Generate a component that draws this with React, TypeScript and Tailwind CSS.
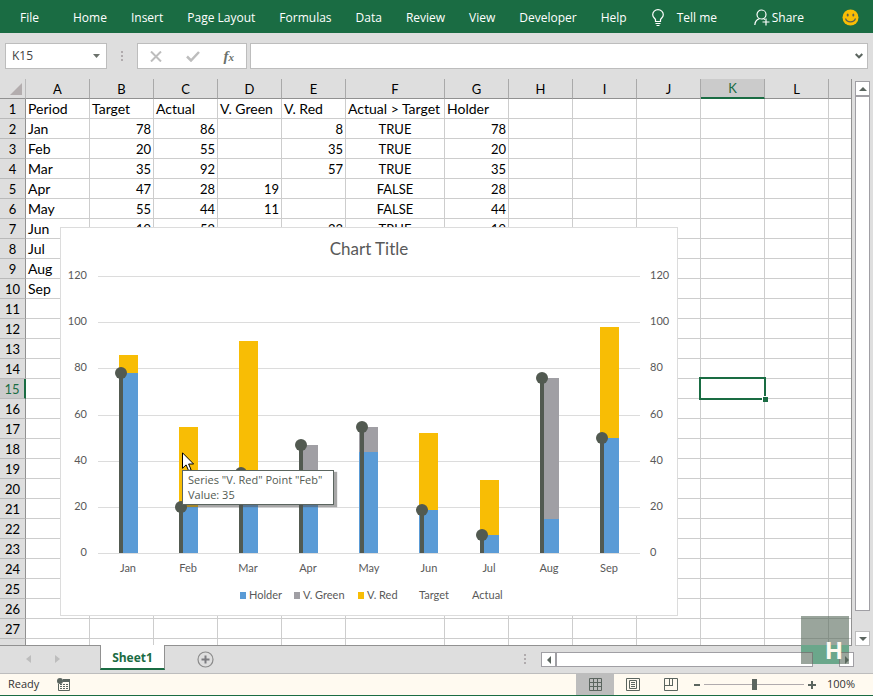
import React, { useState } from "react";

const MENU = [
  "Home",
  "Insert",
  "Page Layout",
  "Formulas",
  "Data",
  "Review",
  "View",
  "Developer",
  "Help",
];

const COLUMNS = ["A", "B", "C", "D", "E", "F", "G", "H", "I", "J", "K", "L"];
const ROW_COUNT = 28;
const SELECTED = { col: "K", row: 15 };

interface PeriodData {
  period: string;
  target: number;
  actual: number;
}

const DATA: PeriodData[] = [
  { period: "Jan", target: 78, actual: 86 },
  { period: "Feb", target: 20, actual: 55 },
  { period: "Mar", target: 35, actual: 92 },
  { period: "Apr", target: 47, actual: 28 },
  { period: "May", target: 55, actual: 44 },
  { period: "Jun", target: 19, actual: 52 },
  { period: "Jul", target: 8, actual: 32 },
  { period: "Aug", target: 76, actual: 15 },
  { period: "Sep", target: 50, actual: 98 },
];

const CELLS: (string | number)[][] = [
  ["Period", "Target", "Actual", "V. Green", "V. Red", "Actual > Target", "Holder"],
  ...DATA.map(({ period, target, actual }) => [
    period,
    target,
    actual,
    actual < target ? target - actual : "",
    actual > target ? actual - target : "",
    actual > target ? "TRUE" : "FALSE",
    Math.min(target, actual),
  ]),
];

const TopMenu = () => (
  <header className="flex h-[33px] shrink-0 items-center bg-[#1a6c43] pt-0.5 pr-3.5 pl-5 text-xs text-white">
    <nav className="flex items-center gap-6">
      <a href="#" className="mr-2.5">
        File
      </a>
      {MENU.map((v) => (
        <a href="#" key={v} className="whitespace-nowrap">
          {v}
        </a>
      ))}
    </nav>
    <button className="ml-6 flex items-center gap-3 whitespace-nowrap">
      <svg width="14" height="18" viewBox="0 0 14 18" fill="none" stroke="#fff" strokeWidth="1.2">
        <path d="M4.500 12.500v-2C3.500 9 1.700 8 1.700 5.700a5.300 5 0 0 1 10.600 0c0 2.300-1.800 3.300-2.800 4.800v2z" />
        <path d="M4.500 14.500h5M5.500 16.500h3" />
      </svg>
      Tell me
    </button>
    <button className="ml-auto flex items-center gap-0.5 whitespace-nowrap">
      <svg width="16" height="17" viewBox="0 0 16 17" fill="none" stroke="#fff" strokeWidth="1.2">
        <circle cx="7.500" cy="5.500" r="4.500" />
        <path d="M.8 16c.3-3.500 2-5.500 4.700-6.300M9.500 9.700l1.500.8M12 9.500v7M8.500 13h7" />
      </svg>
      Share
    </button>
    <button aria-label="Feedback" className="ml-[38px]">
      <svg width="17" height="17" viewBox="0 0 17 17">
        <circle cx="8.500" cy="8.500" r="8" fill="#f8bd05" />
        <ellipse cx="5.700" cy="6" rx="1" ry="1.600" fill="#595f52" />
        <ellipse cx="11.300" cy="6" rx="1" ry="1.600" fill="#595f52" />
        <path d="M3.500 9.500c1.500 4.500 8.500 4.500 10 0" fill="none" stroke="#595f52" strokeWidth="1.200" />
      </svg>
    </button>
  </header>
);

const Dots = () => (
  <div className="flex flex-col gap-0.5">
    <i className="size-0.5 bg-[#b0abad]" />
    <i className="size-0.5 bg-[#b0abad]" />
    <i className="size-0.5 bg-[#b0abad]" />
  </div>
);

const FormulaBar = () => (
  <div className="flex h-[46px] shrink-0 items-center px-[5px]">
    <div className="flex h-[26px] w-[102px] items-center border border-[#bdbdbd] bg-white pr-1.5 pl-1.5">
      <input
        aria-label="Name box"
        defaultValue="K15"
        className="w-full min-w-0 text-xs text-[#444] outline-none"
      />
      <button aria-label="Open name list">
        <svg width="7" height="4" viewBox="0 0 7 4">
          <path d="M0 0h7L3.500 4z" fill="#6b716b" />
        </svg>
      </button>
    </div>
    <div className="flex w-[30px] justify-center">
      <Dots />
    </div>
    <div className="flex h-[26px] w-[110px] items-center justify-between border border-[#bdbdbd] bg-white px-3">
      <button aria-label="Cancel">
        <svg width="12" height="11" viewBox="0 0 12 11" stroke="#bdbdbd" strokeWidth="2">
          <path d="M1 .5l10 10M11 .5l-10 10" />
        </svg>
      </button>
      <button aria-label="Enter">
        <svg width="14" height="11" viewBox="0 0 14 11" fill="none" stroke="#bdbdbd" strokeWidth="2.500">
          <path d="M1 5.500L5 9.500L13 1" />
        </svg>
      </button>
      <button
        aria-label="Insert function"
        className="font-['Liberation_Serif',serif] text-[15px] leading-4 font-bold text-[#6b716b] italic"
      >
        f<span className="text-[11px]">x</span>
      </button>
    </div>
    <div className="ml-[3px] flex h-[26px] flex-1 items-center border border-[#bdbdbd] bg-white px-1">
      <input aria-label="Formula" className="min-w-0 flex-1 text-xs outline-none" />
      <button aria-label="Expand formula bar">
        <svg width="8" height="6" viewBox="0 0 8 6" fill="none" stroke="#5b655f" strokeWidth="2">
          <path d="M.7 1L4 4.300L7.300 1" />
        </svg>
      </button>
    </div>
  </div>
);

// numbers go right, TRUE/FALSE is centered, everything else is plain text
const cellStyle = (value: string | number) => {
  if (typeof value === "number") return "text-right";
  if (value === "TRUE" || value === "FALSE") return "text-center";
  return "text-left text-sm leading-4";
};

const Grid = () => (
  <table className="w-full table-fixed border-separate border-spacing-0 font-['Lato',sans-serif] text-[13px] leading-4 text-black">
    <colgroup>
      <col className="w-[26px]" />
      {COLUMNS.map((c) => (
        <col key={c} className={c === "F" ? "w-[99px]" : "w-16"} />
      ))}
      <col />
    </colgroup>
    <thead>
      <tr className="h-5">
        <th className="border-r border-b border-[#b9b9b9] border-b-[#919191] bg-[#dedede] p-0">
          <svg width="12" height="12" viewBox="0 0 12 12" className="mr-[3px] ml-auto">
            <path d="M12 0v12H0z" fill="#b3adae" />
          </svg>
        </th>
        {COLUMNS.map((c) => (
          <th
            key={c}
            className={
              c === SELECTED.col
                ? "border-r border-b-2 border-[#a9a9a9] border-b-[#1a6c43] bg-[#cbcbcb] p-0 font-normal text-[#1a6c43]"
                : "border-r border-b border-[#a9a9a9] border-b-[#919191] bg-[#dedede] p-0 font-normal"
            }
          >
            {c}
          </th>
        ))}
        <th className="border-b border-[#919191] bg-[#dedede] p-0" />
      </tr>
    </thead>
    <tbody>
      {Array.from({ length: ROW_COUNT }, (_, r) => (
        <tr key={r} className="h-5">
          <th
            className={
              r + 1 === SELECTED.row
                ? "border-r-2 border-b border-[#b9b9b9] border-r-[#1a6c43] bg-[#cbcbcb] p-0 font-normal text-[#1a6c43]"
                : "border-r border-b border-[#b9b9b9] border-r-[#919191] bg-[#dedede] p-0 font-normal"
            }
          >
            {r < ROW_COUNT - 1 && r + 1}
          </th>
          {COLUMNS.map((c, i) => {
            const value = CELLS[r]?.[i] ?? "";
            const selected = c === SELECTED.col && r + 1 === SELECTED.row;
            return (
              <td
                key={c}
                className={`relative border-r border-b border-[#cdcdcd] bg-white px-0.5 py-0 whitespace-nowrap ${cellStyle(
                  value
                )}`}
              >
                {value}
                {selected && (
                  <div className="absolute -inset-0.5 z-10 border-2 border-[#1a6c43]">
                    <i className="absolute -right-1 -bottom-1 size-1.5 border-t border-l border-white bg-[#1a6c43]" />
                  </div>
                )}
              </td>
            );
          })}
          <td className="border-b border-[#cdcdcd] bg-white" />
        </tr>
      ))}
    </tbody>
  </table>
);

// plot area inside the chart object
const PLOT = { left: 38, right: 580, bottom: 326, unit: 2.308 };
const STEP = 60.15;
const gridY = (v: number) => Math.round(PLOT.bottom - v * PLOT.unit);
const barY = (v: number) => Math.ceil(PLOT.bottom - v * PLOT.unit);

const LEGEND = [
  { label: "Holder", x: 189, color: "#5a9bd6" },
  { label: "V. Green", x: 243, color: "#a09fa4" },
  { label: "V. Red", x: 307, color: "#f8bd05" },
  { label: "Target", x: 359, color: "none" },
  { label: "Actual", x: 412, color: "none" },
];

const Chart = () => (
  <svg
    width="618"
    height="389"
    viewBox="0 0 618 389"
    fill="#595959"
    className="font-['Lato',sans-serif] text-[11px]"
  >
    <rect x=".5" y=".5" width="617" height="388" fill="#fff" stroke="#dcdcdc" />
    <text x="309" y="28" textAnchor="middle" className="text-[17px]">
      Chart Title
    </text>
    {[0, 20, 40, 60, 80, 100, 120].map((v) => (
      <g key={v}>
        <rect x={PLOT.left} y={gridY(v)} width={PLOT.right - PLOT.left} height="1" fill="#dcdcdc" />
        <text x="27" y={gridY(v) + 3} textAnchor="end">
          {v}
        </text>
        <text x="590" y={gridY(v) + 3}>
          {v}
        </text>
      </g>
    ))}
    {DATA.map(({ period, target, actual }, i) => {
      const x = Math.floor(59.2 + i * STEP);
      const pin = Math.round(61 + i * STEP);
      const low = barY(Math.min(target, actual));
      const high = barY(Math.max(target, actual));
      return (
        <g key={period}>
          <rect x={x} y={low} width="19" height={PLOT.bottom - low} fill="#5a9bd6" />
          <rect
            x={x}
            y={high}
            width="19"
            height={low - high}
            fill={actual > target ? "#f8bd05" : "#a09fa4"}
          />
          <rect x={pin - 2} y={barY(target)} width="4" height={PLOT.bottom - barY(target)} fill="#525a51" />
          <circle cx={pin} cy={barY(target)} r="6" fill="#525a51" />
          <text x={pin + 7} y="345" textAnchor="middle">
            {period}
          </text>
        </g>
      );
    })}
    {LEGEND.map(({ label, x, color }) => (
      <g key={label}>
        {color !== "none" && <rect x={x - 9} y="365" width="6" height="7" fill={color} />}
        <text x={x} y="372">
          {label}
        </text>
      </g>
    ))}
  </svg>
);

const PointTooltip = () => (
  <>
    <svg width="13" height="20" viewBox="0 0 13 20" className="absolute top-[225px] left-[122px]">
      <path
        d="M.5.800v15.500l3.600-3.400l2.500 5.800l2.500-1l-2.500-5.700h5z"
        fill="#fff"
        stroke="#000"
      />
    </svg>
    <div className="absolute top-[243px] left-[122px] w-[152px] border border-[#5b655f] bg-white pt-px pb-0.5 pl-[5px] text-[11px] leading-[15px] whitespace-nowrap text-[#525a51] shadow-[3px_2px_1px_rgba(80,80,80,0.5)]">
      <p>Series "V. Red" Point "Feb"</p>
      <p>Value: 35</p>
    </div>
  </>
);

const Arrow = ({ d }: { d: string }) => (
  <svg width="8" height="8" viewBox="0 0 8 8">
    <path d={d} fill="#5b655f" />
  </svg>
);

const VerticalScroll = () => (
  <div className="flex w-[15px] shrink-0 flex-col pt-0.5">
    <button
      aria-label="Scroll up"
      className="flex size-[15px] shrink-0 items-center justify-center border border-[#a09fa4] bg-white"
    >
      <Arrow d="M4 2l4 4H0z" />
    </button>
    <div className="flex-1 border border-[#a09fa4] bg-white" />
    <button
      aria-label="Scroll down"
      className="mt-5 flex size-[15px] shrink-0 items-center justify-center border border-[#bdbdbd] bg-white"
    >
      <Arrow d="M4 6L0 2h8z" />
    </button>
  </div>
);

const SheetTabs = () => (
  <div className="flex h-7 shrink-0 items-start border-b border-[#bdbdbd] pr-[19px]">
    <div className="flex w-[100px] items-center gap-6 pt-[9px] pl-[26px]">
      <button aria-label="Previous sheet" className="flex">
        <svg width="5" height="8" viewBox="0 0 5 8">
          <path d="M5 0v8L0 4z" fill="#bdbdbd" />
        </svg>
      </button>
      <button aria-label="Next sheet" className="flex">
        <svg width="5" height="8" viewBox="0 0 5 8">
          <path d="M0 0v8l5-4z" fill="#bdbdbd" />
        </svg>
      </button>
    </div>
    <button className="relative -mt-px h-[25px] w-[65px] border-x border-b-2 border-[#919191] border-b-[#1a6c43] bg-white pt-0.5 text-xs font-bold text-[#1a6c43]">
      Sheet1
    </button>
    <button aria-label="New sheet" className="mt-[5px] ml-8">
      <svg width="17" height="17" viewBox="0 0 17 17" fill="none">
        <circle cx="8.500" cy="8.500" r="7.500" stroke="#8b8b8b" strokeWidth="1.200" />
        <path d="M8.500 4.500v8M4.500 8.500h8" stroke="#7c7c80" strokeWidth="2" />
      </svg>
    </button>
    <div className="mt-2 ml-auto">
      <Dots />
    </div>
    <div className="mt-1.5 ml-[15px] flex h-[15px] w-[313px]">
      <button
        aria-label="Scroll left"
        className="flex w-[15px] items-center justify-center border border-[#a09fa4] bg-white"
      >
        <Arrow d="M6 0v8L2 4z" />
      </button>
      <div className="w-[257px] border border-[#a09fa4] bg-white" />
      <button
        aria-label="Scroll right"
        className="ml-auto flex w-[15px] items-center justify-center border border-[#a09fa4] bg-white"
      >
        <Arrow d="M2 0v8l4-4z" />
      </button>
    </div>
  </div>
);

const StatusBar = () => {
  const [zoom, setZoom] = useState(100);

  return (
    <footer className="flex h-[22px] shrink-0 items-center border-b border-[#1a6c43] bg-[#fffaf0] pr-[17px] pl-2 text-[11px] text-[#333]">
      <span>Ready</span>
      <button aria-label="Record macro" className="ml-[18px]">
        <svg width="14" height="13" viewBox="0 0 14 13" fill="none">
          <path d="M6 1.500h6.500v11h-11V6" stroke="#5b655f" />
          <path d="M6 1h7v3H6z" fill="#5b655f" />
          <path d="M3 6.500h9M3 8.500h9M3 10.500h9" stroke="#5b655f" strokeDasharray="2 1" />
          <circle cx="3" cy="3" r="3" fill="#5b655f" />
        </svg>
      </button>
      <div className="ml-auto flex h-full">
        <button aria-label="Normal view" className="flex w-[38px] items-center justify-center bg-[#bdbdbd]">
          <svg width="13" height="13" viewBox="0 0 13 13" fill="none" stroke="#5b655f">
            <path d="M.5.500h12v12H.500zM4.500 0v13M8.500 0v13M0 4.500h13M0 8.500h13" />
          </svg>
        </button>
        <button aria-label="Page layout view" className="flex w-[38px] items-center justify-center">
          <svg width="14" height="13" viewBox="0 0 14 13" fill="none" stroke="#5b655f">
            <path d="M.5.500h13v12H.500zM3.500 2.500h7v8h-7zM5 4.500h4M5 6.500h4M5 8.500h4" />
          </svg>
        </button>
        <button aria-label="Page break view" className="flex w-[38px] items-center justify-center">
          <svg width="14" height="13" viewBox="0 0 14 13" fill="none" stroke="#5b655f">
            <path d="M.5.500h13v12H.500zM5.500 0v7M8.500 0v7M0 7.500h9" />
          </svg>
        </button>
      </div>
      <button aria-label="Zoom out" className="ml-1 h-0.5 w-1.5 bg-[#5b655f]" />
      <input
        type="range"
        aria-label="Zoom"
        min={0}
        max={200}
        value={zoom}
        onChange={(e) => setZoom(Number(e.target.value))}
        className="mx-1 h-3 w-[100px] appearance-none bg-transparent bg-[linear-gradient(#b0abad,#b0abad)] bg-[length:100%_1px] bg-center bg-no-repeat [&::-webkit-slider-thumb]:h-[11px] [&::-webkit-slider-thumb]:w-[5px] [&::-webkit-slider-thumb]:appearance-none [&::-webkit-slider-thumb]:bg-[#5b655f]"
      />
      <button aria-label="Zoom in">
        <svg width="8" height="8" viewBox="0 0 8 8" stroke="#5b655f" strokeWidth="2">
          <path d="M4 0v8M0 4h8" />
        </svg>
      </button>
      <span className="w-10 pl-[11px] whitespace-nowrap">{zoom}%</span>
    </footer>
  );
};

// translucent badge over the bottom right corner
const CornerBadge = () => (
  <div className="absolute right-6 bottom-8 size-12 bg-[#57695a]/60">
    <div className="absolute inset-x-0 bottom-3 h-[7px] bg-[#6ba78b]" />
    <div className="absolute right-2.5 bottom-0 left-3 h-3 bg-[#6ba78b]" />
    <span className="absolute right-1.5 bottom-0 text-2xl leading-7 font-bold text-[#fffaf0]">H</span>
  </div>
);

const App: React.FC = () => {
  return (
    <div className="relative flex h-screen flex-col overflow-hidden bg-[#dedede] font-['Open_Sans',sans-serif]">
      <TopMenu />
      <FormulaBar />
      <main className="flex min-h-0 flex-1 gap-[3px] pr-[3px]">
        <div className="relative min-w-0 flex-1 overflow-hidden border-r border-b border-[#919191]">
          <Grid />
          <div className="absolute top-[148px] left-[60px]">
            <Chart />
            <PointTooltip />
          </div>
        </div>
        <VerticalScroll />
      </main>
      <SheetTabs />
      <StatusBar />
      <CornerBadge />
    </div>
  );
};

export default App;
